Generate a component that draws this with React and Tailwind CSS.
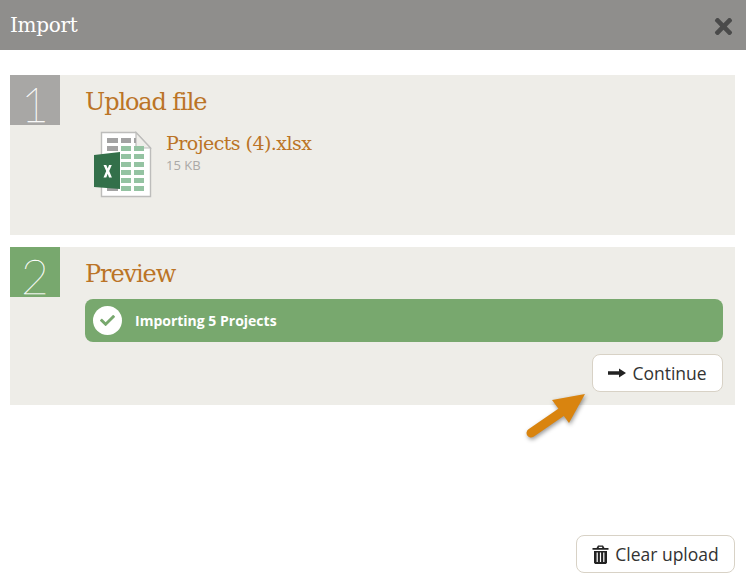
import React from "react";
import { FaTimes, FaCheck } from "react-icons/fa";

const slab = "font-['DejaVu_Serif',serif]";

const greenCells = [
    [29, 15], [42, 15], [29, 23], [42, 23], [29, 31], [42, 31],
    [29, 39], [42, 39], [29, 47], [42, 47], [29, 55], [42, 55],
];

const ExcelIcon = () => (
    <svg width="60" height="67" viewBox="0 0 60 67" className="shrink-0">
        <path d="M9.500 1.500H44L58.500 17V65.500H9.500Z" fill="#fff" stroke="#bdbdbb" strokeWidth="1.400" />
        <path d="M44 1.500V17H58.500Z" fill="#efeeea" stroke="#bdbdbb" strokeWidth="1.200" />
        <g fill="#a3a3a3">
            <rect x="15" y="7" width="11" height="5" />
            <rect x="29" y="7" width="10" height="5" />
            <rect x="42" y="7" width="2" height="5" />
            <rect x="15" y="15" width="11" height="5" />
            <rect x="15" y="55" width="11" height="5" />
        </g>
        <g fill="#94c3a2">
            {greenCells.map(([x, y]) => (
                <rect key={`${x}-${y}`} x={x} y={y} width="10" height="5" />
            ))}
        </g>
        <path d="M2 24L28 21V58L2 56Z" fill="#33704a" />
        <path d="M11.500 34H14.300L15.700 37.500L17 34H19.800L17.200 40L19.900 46.500H17L15.700 42.800L14.300 46.500H11.500L14.200 40Z" fill="#fff" />
    </svg>
);

const ArrowIcon = () => (
    <svg width="18" height="10" viewBox="0 0 18 10" className="shrink-0">
        <path d="M0 3.200H11V0.500L18 5L11 9.500V6.800H0Z" fill="#222" />
    </svg>
);

const TrashIcon = () => (
    <svg width="17" height="19" viewBox="0 0 17 19" className="shrink-0">
        <path d="M6 0.500H11L12.500 3H16.500V4.800H0.500V3H4.500Z" fill="#222" />
        <path d="M2 6H15V17.500L14 19H3L2 17.500Z" fill="#222" />
        <g fill="#fff">
            <rect x="4.600" y="7.500" width="1.200" height="9.500" />
            <rect x="7.900" y="7.500" width="1.200" height="9.500" />
            <rect x="11.200" y="7.500" width="1.200" height="9.500" />
            <rect x="6.800" y="1.800" width="3.400" height="1.200" />
        </g>
    </svg>
);

const Step = ({ number, title, numberColor, className, children }) => (
    <div className={`flex bg-[#eeede8] ${className}`}>
        <div className={`w-[50px] h-[50px] shrink-0 flex items-center justify-center pt-[7px] text-white text-[48px] font-thin [-webkit-text-stroke:0.3px_white] font-['Lato',sans-serif] ${numberColor}`}>
            {number}
        </div>
        <div className="flex-1 pl-[25px] pr-3">
            <h2 className={`text-[24px] leading-[30px] pt-3 text-[#bb7426] tracking-[-1.1px] ${slab}`}>{title}</h2>
            {children}
        </div>
    </div>
);

const Button = ({ icon, label, className }) => (
    <button className={`flex items-center justify-center gap-[6px] bg-white border border-[#d8d2c6] rounded-lg text-[17.5px] text-[#333] ${className}`}>
        {icon}
        {label}
    </button>
);

export default function App() {
    return (
        <div className="relative w-[746px] h-[582px] flex flex-col bg-white overflow-hidden font-['Open_Sans',sans-serif]">
            <div className="h-[50px] shrink-0 flex items-center justify-between bg-[#8f8e8c] pl-[10px] pr-[11px]">
                <h1 className={`text-white text-[20px] tracking-[-0.3px] ${slab}`}>Import</h1>
                <FaTimes className="text-[#4a4a4a] text-[25px] mt-[3px] -mr-[1px]" />
            </div>

            <div className="flex flex-col gap-3 pt-[25px] pl-[10px] pr-[11px]">
                <Step number="1" title="Upload file" numberColor="bg-[#a8a7a5]" className="h-[160px]">
                    <div className="flex ml-[7px] mt-[14px]">
                        <ExcelIcon />
                        <div className="ml-[14px] pt-[1px]">
                            <div className={`text-[19px] leading-[22px] text-[#bb7426] tracking-[-0.55px] ${slab}`}>Projects (4).xlsx</div>
                            <div className="text-[13px] leading-[22px] text-[#aaa9a6]">15 KB</div>
                        </div>
                    </div>
                </Step>

                <Step number="2" title="Preview" numberColor="bg-[#78a86e]" className="h-[158px]">
                    <div className="h-[43px] mt-[10px] flex items-center gap-[13px] pl-2 bg-[#78a86e] rounded-lg text-white text-[14px] font-bold">
                        <span className="w-[29px] h-[29px] rounded-full bg-white flex items-center justify-center">
                            <FaCheck className="text-[#78a86e] text-[15px]" />
                        </span>
                        Importing 5 Projects
                    </div>
                    <div className="flex justify-end mt-3">
                        <Button icon={<ArrowIcon />} label="Continue" className="w-[131px] h-[38px]" />
                    </div>
                </Step>
            </div>

            {/* arrow pointing at continue */}
            <svg className="absolute left-[520px] top-[390px] drop-shadow-[1px_2px_2px_rgba(0,0,0,0.4)]" width="70" height="54" viewBox="0 0 70 54">
                <path d="M11 43L43 21" stroke="#d9840f" strokeWidth="9" strokeLinecap="round" />
                <path d="M32 10L65 4L49 33Z" fill="#d9840f" />
            </svg>

            <div className="mt-auto flex justify-end pr-[11px] pb-[9px]">
                <Button icon={<TrashIcon />} label="Clear upload" className="w-[159px] h-[38px]" />
            </div>
        </div>
    );
}
